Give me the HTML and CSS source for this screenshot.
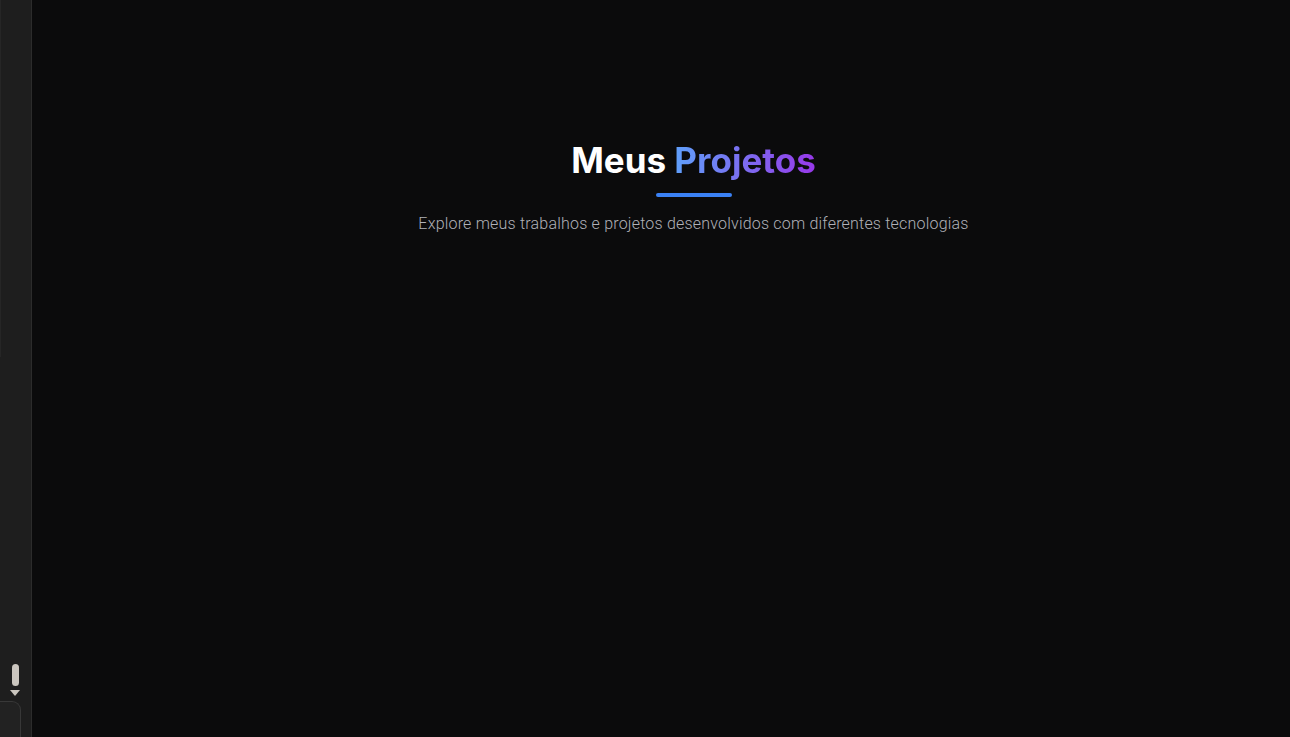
FILE: index.html
```html
<!DOCTYPE html>
<html lang="pt">
<head>
<meta charset="utf-8">
<title>Meus Projetos</title>
<link rel="stylesheet" href="styles.css">
</head>
<body>
<div class="app">
  <aside class="side">
    <div class="side-edge"></div>
    <div class="side-bottom">
      <div class="thumb"></div>
      <div class="arrow"></div>
      <div class="box"></div>
    </div>
  </aside>
  <main class="main">
    <section class="projects">
      <h1 class="title">Meus <span class="grad">Projetos</span></h1>
      <div class="bar"></div>
      <p class="sub">Explore meus trabalhos e projetos desenvolvidos com diferentes tecnologias</p>
    </section>
  </main>
</div>
</body>
</html>
```
FILE: styles.css
```css
html, body {
  margin: 0;
  padding: 0;
  height: 100%;
  background: #0b0b0c;
}
.app {
  display: flex;
  height: 737px;
  overflow: hidden;
}
.side {
  width: 31px;
  flex: none;
  background: #1e1e1e;
  border-right: 1px solid #2c2c2c;
  display: flex;
  flex-direction: column;
  justify-content: space-between;
}
.side-edge {
  width: 1px;
  height: 357px;
  background: #262626;
}
.side-bottom {
  display: flex;
  flex-direction: column;
  align-items: flex-start;
}
.thumb {
  width: 7px;
  height: 22px;
  border-radius: 4px;
  background: #cbc6bf;
  margin-left: 12px;
}
.arrow {
  width: 0;
  height: 0;
  border-left: 5px solid transparent;
  border-right: 5px solid transparent;
  border-top: 6px solid #cbc6bf;
  margin-left: 10px;
  margin-top: 4px;
}
.box {
  width: 20px;
  height: 35px;
  margin-top: 5px;
  background: #222222;
  border: 1px solid #383838;
  border-left: none;
  border-bottom: none;
  border-top-right-radius: 9px;
}
.main {
  flex: 1;
  padding-left: 65px;
}
.projects {
  display: flex;
  flex-direction: column;
  align-items: center;
  padding-top: 138px;
}
.title {
  margin: 0;
  font-family: "Inter", "Noto Sans", sans-serif;
  font-weight: 700;
  font-size: 35px;
  line-height: 44px;
  color: #ffffff;
  letter-spacing: 0;
}
.grad {
  background: linear-gradient(90deg, #5fa0fb 0%, #7c6cf0 50%, #9838ea 100%);
  -webkit-background-clip: text;
  background-clip: text;
  color: transparent;
}
.bar {
  width: 76px;
  height: 4px;
  border-radius: 2px;
  background: #3b82f6;
  margin-top: 11px;
}
.sub {
  margin: 17px 0 0;
  font-family: "Roboto", "Liberation Sans", sans-serif;
  font-weight: 300;
  font-size: 16px;
  color: #b0b1b8;
  letter-spacing: 0.2px;
}
```
